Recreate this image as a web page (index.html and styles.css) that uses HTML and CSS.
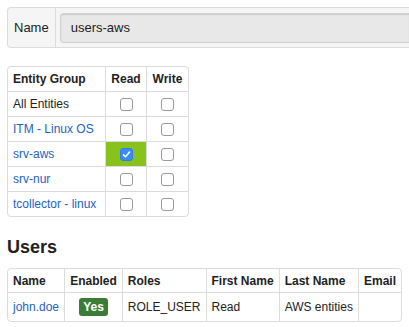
FILE: index.html
```html
<!DOCTYPE html>
<html lang="en">
<head>
    <meta charset="UTF-8">
    <title>Group users-aws</title>
    <link rel="stylesheet" href="styles.css">
</head>
<body>
    <div class="name-group">
        <span class="name-label">Name</span>
        <input class="name-input" type="text" value="users-aws" readonly>
    </div>

    <table class="grid entity-table">
        <thead>
            <tr>
                <th class="col-group">Entity Group</th>
                <th class="col-check">Read</th>
                <th class="col-check">Write</th>
            </tr>
        </thead>
        <tbody>
            <tr>
                <td>All Entities</td>
                <td class="check"><span class="box"></span></td>
                <td class="check"><span class="box"></span></td>
            </tr>
            <tr>
                <td><a href="#">ITM - Linux OS</a></td>
                <td class="check"><span class="box"></span></td>
                <td class="check"><span class="box"></span></td>
            </tr>
            <tr>
                <td><a href="#">srv-aws</a></td>
                <td class="check granted"><span class="box checked">
                    <svg width="9" height="9" viewBox="0 0 9 9"><path d="M1.5 4.8 L3.6 6.8 L7.5 2" fill="none" stroke="#fff" stroke-width="1.6" stroke-linecap="round" stroke-linejoin="round"/></svg>
                </span></td>
                <td class="check"><span class="box"></span></td>
            </tr>
            <tr>
                <td><a href="#">srv-nur</a></td>
                <td class="check"><span class="box"></span></td>
                <td class="check"><span class="box"></span></td>
            </tr>
            <tr>
                <td><a href="#">tcollector - linux</a></td>
                <td class="check"><span class="box"></span></td>
                <td class="check"><span class="box"></span></td>
            </tr>
        </tbody>
    </table>

    <h2 class="section-title">Users</h2>

    <table class="grid users-table">
        <thead>
            <tr>
                <th class="u-name">Name</th>
                <th class="u-enabled">Enabled</th>
                <th class="u-roles">Roles</th>
                <th class="u-first">First Name</th>
                <th class="u-last">Last Name</th>
                <th class="u-email">Email</th>
            </tr>
        </thead>
        <tbody>
            <tr>
                <td><a href="#">john.doe</a></td>
                <td class="center"><span class="badge">Yes</span></td>
                <td>ROLE_USER</td>
                <td>Read</td>
                <td>AWS entities</td>
                <td></td>
            </tr>
        </tbody>
    </table>
</body>
</html>
```

FILE: styles.css
```css
* {
    box-sizing: border-box;
    margin: 0;
    padding: 0;
}
body {
    padding: 7px;
    overflow: hidden;
    font-family: "Liberation Sans", Arial, sans-serif;
    font-size: 12px;
    color: #222;
    background-color: #fff;
}
a {
    color: #2662c3;
    text-decoration: none;
}
/* runs off the right edge of the window, like the original */
.name-group {
    display: flex;
    align-items: center;
    height: 41px;
    margin-right: -7px;
    border: 1px solid #dcdcdc;
    border-right: 0;
    border-radius: 4px 0 0 4px;
    background-color: #f5f5f5;
}
.name-label {
    display: flex;
    align-items: center;
    height: 100%;
    padding: 0 6px 0 6px;
    border-right: 1px solid #dcdcdc;
    font-size: 13px;
}
.name-input {
    flex: 1;
    min-width: 0;
    height: 30px;
    margin-left: 4px;
    padding: 0 10px;
    border: 1px solid #d0d0d0;
    border-right: 0;
    border-radius: 4px 0 0 4px;
    background-color: #e8e8e8;
    box-shadow: inset 0 1px 1px rgba(0,0,0,0.12);
    font-family: inherit;
    font-size: 13px;
    color: #222;
    outline: none;
}
.grid {
    border-collapse: separate;
    border-spacing: 0;
    border: 1px solid #dcdcdc;
    border-radius: 4px;
}
.grid th, .grid td {
    border-right: 1px solid #dcdcdc;
    border-bottom: 1px solid #dcdcdc;
    text-align: left;
    white-space: nowrap;
}
.grid th:last-child, .grid td:last-child {
    border-right: 0;
}
.grid tr:last-child td {
    border-bottom: 0;
}
.grid th {
    font-weight: bold;
    color: #222;
}
.entity-table {
    margin-top: 18px;
}
.entity-table th, .entity-table td {
    height: 25px;
    padding: 0 5px;
}
.entity-table tbody tr:last-child td {
    height: 24px;
}
.col-group {
    width: 98px;
}
.col-check {
    width: 41px;
}
.grid th.col-check {
    text-align: center;
}
.grid .check {
    text-align: center;
    vertical-align: middle;
}
.check.granted {
    background-color: #88c21c;
}
.box {
    display: inline-flex;
    align-items: center;
    justify-content: center;
    width: 13px;
    height: 13px;
    vertical-align: middle;
    border: 1px solid #9a9a9a;
    border-radius: 3px;
    background-color: #fff;
}
.box.checked {
    border-color: #2f7de9;
    background-color: #3b8bf6;
}
.section-title {
    margin-top: 20px;
    font-size: 18px;
    font-weight: bold;
    color: #222;
}
.users-table {
    margin-top: 10px;
    width: 395px;
}
.users-table th {
    height: 24px;
    padding: 0 5px;
}
.users-table td {
    height: 28px;
    padding: 0 5px;
}
.u-name { width: 58px; }
.u-enabled { width: 58px; }
.u-roles { width: 81px; }
.u-first { width: 74px; }
.u-last { width: 80px; }
.grid .center {
    text-align: center;
}
.badge {
    display: inline-block;
    padding: 2px 4px;
    border-radius: 3px;
    background-color: #3b7d36;
    color: #fff;
    font-weight: bold;
    font-size: 12px;
}
```
